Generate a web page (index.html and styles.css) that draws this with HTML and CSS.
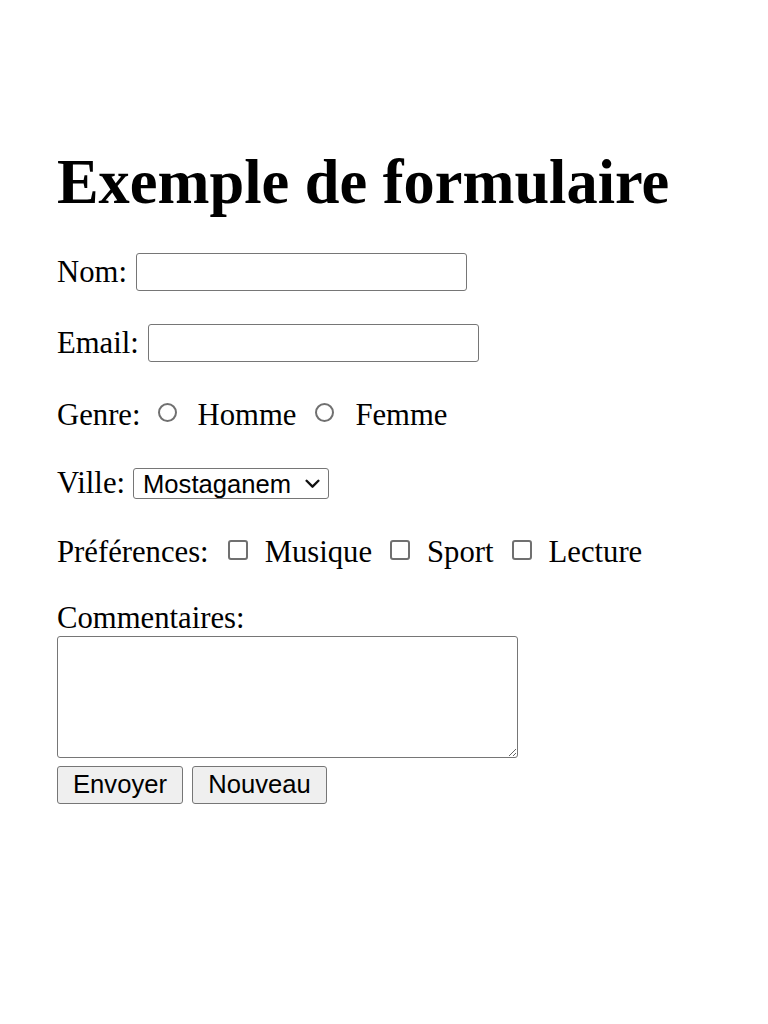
FILE: index.html
```html
<!DOCTYPE html>
<html lang="fr">
<head>
<meta charset="utf-8">
<title>Exemple de formulaire</title>
<link rel="stylesheet" href="styles.css">
</head>
<body>
<main class="page">
  <h1 class="title">Exemple de formulaire</h1>
  <form class="form">
    <div class="row row-1">
      <label class="label" for="nom">Nom:</label>
      <input class="field field-nom" id="nom" type="text">
    </div>
    <div class="row row-2">
      <label class="label" for="email">Email:</label>
      <input class="field" id="email" type="email">
    </div>
    <div class="row row-3">
      <span class="label">Genre:</span>
      <input class="radio" type="radio" name="genre" id="homme">
      <label class="option" for="homme">Homme</label>
      <input class="radio" type="radio" name="genre" id="femme">
      <label class="option" for="femme">Femme</label>
    </div>
    <div class="row row-4">
      <label class="label" for="ville">Ville:</label>
      <span class="select-wrap">
        <select class="select" id="ville">
          <option>Mostaganem</option>
          <option>Oran</option>
          <option>Alger</option>
        </select>
        <svg class="chevron" viewBox="0 0 14 9" width="15" height="10" aria-hidden="true"><path d="M1.5 1.5 L7 7 L12.5 1.5" fill="none" stroke="#111" stroke-width="2.2" stroke-linecap="round" stroke-linejoin="round"/></svg>
      </span>
    </div>
    <div class="row row-5">
      <span class="label">Préférences:</span>
      <input class="check" type="checkbox" id="musique">
      <label class="option" for="musique">Musique</label>
      <input class="check" type="checkbox" id="sport">
      <label class="option" for="sport">Sport</label>
      <input class="check" type="checkbox" id="lecture">
      <label class="option" for="lecture">Lecture</label>
    </div>
    <div class="comments">
      <label class="label comments-label" for="commentaires">Commentaires:</label>
      <textarea class="textarea" id="commentaires"></textarea>
      <div class="actions">
        <button class="btn btn-send" type="submit">Envoyer</button>
        <button class="btn btn-new" type="reset">Nouveau</button>
      </div>
    </div>
  </form>
</main>
</body>
</html>
```
FILE: styles.css
```css
html, body {
  margin: 0;
  padding: 0;
  background: #fff;
}

body {
  font-family: "Liberation Serif", "Times New Roman", serif;
  font-size: 30.7px;
  color: #000;
}

.page {
  padding: 146px 0 0 57px;
}

.title {
  margin: 0;
  font-size: 62.4px;
  line-height: 72px;
  font-weight: bold;
}

.form {
  display: flex;
  flex-direction: column;
  margin-top: 34px;
}

.row {
  display: flex;
  align-items: center;
  gap: 9px;
  line-height: 1;
}

.row-1 { height: 40px; }
.row-2 { height: 40px; margin-top: 31px; }
.row-3 { height: 39px; margin-top: 33px; gap: 0; }
.row-4 { height: 37px; margin-top: 30px; gap: 8px; }
.row-5 { height: 36px; margin-top: 32px; gap: 0; }

.label, .option {
  white-space: nowrap;
  flex: none;
}

.field {
  box-sizing: border-box;
  width: 331px;
  height: 38px;
  margin: 0;
  padding: 2px 4px;
  border: 1.5px solid #767676;
  border-radius: 3px;
  font-family: "Liberation Sans", Arial, sans-serif;
  font-size: 25.6px;
  background: #fff;
}

.radio {
  appearance: none;
  -webkit-appearance: none;
  box-sizing: border-box;
  flex: none;
  width: 19px;
  height: 19px;
  margin: 0 21px 6px 17px;
  border: 2px solid #707070;
  border-radius: 50%;
  background: #fff;
}

.radio + .option + .radio {
  margin-left: 19px;
}

.check {
  appearance: none;
  -webkit-appearance: none;
  box-sizing: border-box;
  flex: none;
  width: 20px;
  height: 20px;
  margin: 0 17px 4px 18px;
  border: 2px solid #707070;
  border-radius: 3px;
  background: #fff;
}

.check:first-of-type {
  margin-left: 19px;
}

.select-wrap {
  position: relative;
  display: inline-flex;
}

.select {
  appearance: none;
  -webkit-appearance: none;
  box-sizing: border-box;
  width: 196px;
  height: 31px;
  margin: 0;
  padding: 0 0 0 9px;
  border: 1.5px solid #767676;
  border-radius: 3px;
  background: #fff;
  color: #000;
  font-family: "Liberation Sans", Arial, sans-serif;
  font-size: 25.6px;
  line-height: 28px;
}

.chevron {
  position: absolute;
  right: 9px;
  top: 11px;
  pointer-events: none;
}

.comments {
  display: flex;
  flex-direction: column;
  align-items: flex-start;
  margin-top: 31px;
}

.comments-label {
  line-height: 35px;
  height: 35px;
}

.textarea {
  box-sizing: border-box;
  width: 461px;
  height: 122px;
  margin: 0;
  padding: 2px;
  border: 1.5px solid #767676;
  border-radius: 3px;
  font-family: "Liberation Mono", monospace;
  font-size: 25.6px;
  background: #fff;
}

.actions {
  display: flex;
  gap: 9px;
  margin-top: 8px;
}

.btn {
  box-sizing: border-box;
  height: 38px;
  margin: 0;
  padding: 0 15px;
  border: 1.5px solid #767676;
  border-radius: 3px;
  background: #efefef;
  color: #000;
  font-family: "Liberation Sans", Arial, sans-serif;
  font-size: 25.6px;
  line-height: 1;
}

.btn-send { width: 126px; }
.btn-new { width: 135px; }
```
